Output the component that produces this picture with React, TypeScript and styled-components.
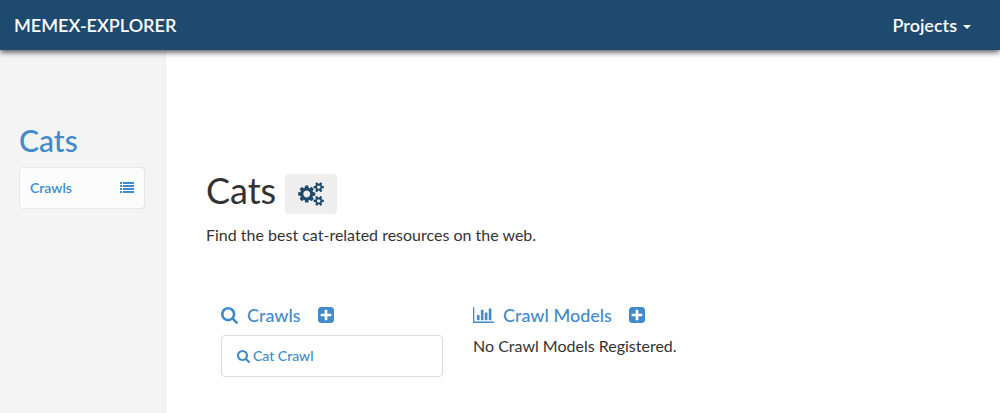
import React from "react";
import styled, { createGlobalStyle } from "styled-components";

const GlobalStyle = createGlobalStyle`
  *, *::before, *::after { box-sizing: border-box; }
  html, body, #root { min-height: 100vh; }
  body {
    margin: 0;
    background: #fff;
    color: #333;
    font-family: Lato, "Liberation Sans", sans-serif;
    font-size: 16px;
    line-height: 24px;
  }
  h1, h2, p, ul { margin: 0; padding: 0; }
  a { color: #428bca; text-decoration: none; }
`;

const Page = styled.div`
  display: flex;
  flex-direction: column;
  min-height: 100vh;
`;

const Navbar = styled.header`
  position: relative;
  z-index: 1;
  display: flex;
  align-items: center;
  justify-content: space-between;
  height: 50px;
  padding: 0 29px 0 14px;
  background: #1e4a70;
  box-shadow: 0 2px 6px rgba(0, 0, 0, 0.7);
`;

const Brand = styled.a`
  color: #fff;
  font-size: 18px;
  font-weight: 600;
`;

const MenuButton = styled.button`
  display: flex;
  align-items: center;
  gap: 6px;
  padding: 0;
  border: 0;
  background: none;
  color: #fff;
  font: inherit;
  font-size: 18px;
  font-weight: 600;
`;

const Caret = styled.span`
  margin-top: 3px;
  border-top: 4px solid;
  border-right: 4px solid transparent;
  border-left: 4px solid transparent;
`;

const Body = styled.div`
  display: flex;
  flex: 1;
`;

const Sidebar = styled.nav`
  flex: none;
  width: 166px;
  padding: 74px 20px 20px 19px;
  border-right: 1px solid #eee;
  background: #f4f4f4;
`;

const SidebarTitle = styled.h2`
  font-size: 30px;
  font-weight: 500;
  line-height: 33px;
`;

const SidebarLink = styled.a`
  display: flex;
  align-items: center;
  justify-content: space-between;
  height: 42px;
  margin-top: 10px;
  padding: 0 10px;
  border: 1px solid #e7e7e7;
  border-radius: 4px;
  background: #fcfcfc;
  font-size: 14px;
  font-weight: 600;
`;

const Main = styled.main`
  flex: 1;
  padding: 116px 36px 36px 40px;
`;

const TitleRow = styled.div`
  display: flex;
  align-items: center;
  gap: 9px;
`;

const Title = styled.h1`
  font-size: 36px;
  font-weight: 400;
  line-height: 40px;
`;

const SettingsButton = styled.button`
  display: flex;
  align-items: center;
  justify-content: center;
  width: 52px;
  height: 40px;
  margin-top: 8px;
  padding: 0;
  border: 0;
  border-radius: 4px;
  background: #eee;
  color: #1e4a70;
`;

const Description = styled.p`
  margin-top: 9px;
`;

const Columns = styled.div`
  display: grid;
  grid-template-columns: repeat(3, minmax(0, 222px));
  gap: 30px;
  margin-top: 56px;
  padding: 0 15px;
`;

const SectionHeader = styled.div`
  display: flex;
  align-items: center;
  gap: 9px;
  height: 24px;
  color: #428bca;
`;

const SectionTitle = styled.h2`
  font-size: 18px;
  font-weight: 500;
`;

const AddButton = styled.button`
  display: flex;
  margin-left: 8px;
  padding: 0;
  border: 0;
  background: none;
  color: inherit;
`;

const CrawlList = styled.ul`
  margin-top: 8px;
  list-style: none;
`;

const CrawlLink = styled.a`
  display: flex;
  align-items: center;
  gap: 3px;
  height: 42px;
  padding: 0 15px;
  border: 1px solid #ddd;
  border-radius: 4px;
  font-size: 14px;
  font-weight: 500;
`;

const EmptyNote = styled.p`
  margin-top: 7px;
`;

const Glyph = styled.svg`
  display: block;
  flex: none;
  fill: currentColor;
`;

type IconProps = { size: number };

const SearchIcon = ({ size }: IconProps) => (
  <Glyph width={size} height={size} viewBox="64 128 1664 1664" aria-hidden="true">
    <path d="M1216 832q0-185-131.5-316.5T768 384 451.5 515.5 320 832t131.5 316.5T768 1280t316.5-131.5T1216 832zm512 832q0 52-38 90t-90 38q-54 0-90-38l-343-342q-179 124-399 124-143 0-273.5-55.5t-225-150-150-225T64 832t55.5-273.5 150-225 225-150T768 128t273.5 55.5 225 150 150 225T1472 832q0 220-124 399l343 343q37 37 37 90z" />
  </Glyph>
);

const PlusIcon = ({ size }: IconProps) => (
  <Glyph width={size} height={size} viewBox="128 128 1536 1536" aria-hidden="true">
    <path d="M1408 960v-128q0-26-19-45t-45-19h-320v-320q0-26-19-45t-45-19h-128q-26 0-45 19t-19 45v320h-320q-26 0-45 19t-19 45v128q0 26 19 45t45 19h320v320q0 26 19 45t45 19h128q26 0 45-19t19-45v-320h320q26 0 45-19t19-45zm256-544v960q0 119-84.5 203.5t-203.5 84.5h-960q-119 0-203.5-84.5t-84.5-203.5v-960q0-119 84.5-203.5t203.5-84.5h960q119 0 203.5 84.5t84.5 203.5z" />
  </Glyph>
);

const ChartIcon = () => (
  <Glyph width={21} height={16} viewBox="0 128 2048 1536" aria-hidden="true">
    <path d="M640 896v512h-256v-512h256zm384-512v1024h-256v-1024h256zm1024 1152v128h-2048v-1536h128v1408h1920zm-640-896v768h-256v-768h256zm384-384v1152h-256v-1152h256z" />
  </Glyph>
);

const ListIcon = () => (
  <Glyph width={14} height={12} viewBox="0 0 14 12" aria-hidden="true">
    {[0, 3, 6, 9].map((y) => (
      <path key={y} d={`M0 ${y}h2v2h-2zM3 ${y}h11v2h-11z`} />
    ))}
  </Glyph>
);

const SMALL_COG =
  "v140q0 16-149 31-12 27-30 52 51 113 51 138 0 4-4 7-122 71-124 71-8 0-46-47t-52-68q-20 2-30 2t-30-2q-14 21-52 68t-46 47q-2 0-124-71-4-3-4-7 0-25 51-138-18-25-30-52-149-15-149-31v-140q0-16 149-31 13-29 30-52-51-113-51-138 0-4 4-7 4-2 35-20t59-34 30-16q8 0 46 46.5t52 67.5q20-2 30-2t30 2q51-71 92-112l6-2q4 0 124 70 4 3 4 7 0 25-51 138 17 23 30 52 149 15 149 31z";

const CogsIcon = () => (
  <Glyph width={26} height={24} viewBox="0 0 1920 1792" aria-hidden="true">
    <path
      d={
        "M896 896q0-106-75-181t-181-75-181 75-75 181 75 181 181 75 181-75 75-181zm768 512q0-52-38-90t-90-38-90 38-38 90q0 53 37.5 90.5t90.5 37.5 90.5-37.5 37.5-90.5zm0-1024q0-52-38-90t-90-38-90 38-38 90q0 53 37.5 90.5t90.5 37.5 90.5-37.5 37.5-90.5zm-384 421v185q0 10-7 19.5t-16 10.5l-155 24q-11 35-32 76 34 48 90 115 7 11 7 20 0 12-7 19-23 30-82.5 89.5t-78.5 59.5q-11 0-21-7l-115-90q-37 19-77 31-11 108-23 155-7 24-30 24h-186q-11 0-20-7.5t-10-17.5l-23-153q-34-10-75-31l-118 89q-7 7-20 7-11 0-21-8-144-133-144-160 0-9 7-19 10-14 41-53t47-61q-23-44-35-82l-152-24q-10-1-17-9.5t-7-19.5v-185q0-10 7-19.5t16-10.5l155-24q11-35 32-76-34-48-90-115-7-11-7-20 0-12 7-20 22-30 82-89t79-59q11 0 21 7l115 90q34-18 77-32 11-108 23-154 7-24 30-24h186q11 0 20 7.5t10 17.5l23 153q34 10 75 31l118-89q8-7 20-7 11 0 21 8 144 133 144 160 0 8-7 19-12 16-42 54t-45 60q23 48 34 82l152 23q10 2 17 10.5t7 19.5z" +
        `M1920 1338${SMALL_COG}M1920 314${SMALL_COG}`
      }
    />
  </Glyph>
);

export default function App() {
  return (
    <>
      <GlobalStyle />
      <Page>
        <Navbar>
          <Brand href="#home">MEMEX-EXPLORER</Brand>
          <MenuButton type="button" aria-haspopup="menu">
            Projects
            <Caret />
          </MenuButton>
        </Navbar>
        <Body>
          <Sidebar>
            <SidebarTitle>
              <a href="#cats">Cats</a>
            </SidebarTitle>
            <SidebarLink href="#crawls">
              Crawls
              <ListIcon />
            </SidebarLink>
          </Sidebar>
          <Main>
            <TitleRow>
              <Title>Cats</Title>
              <SettingsButton type="button" aria-label="Project settings">
                <CogsIcon />
              </SettingsButton>
            </TitleRow>
            <Description>Find the best cat-related resources on the web.</Description>
            <Columns>
              <section>
                <SectionHeader>
                  <SearchIcon size={17} />
                  <SectionTitle>
                    <a href="#crawls">Crawls</a>
                  </SectionTitle>
                  <AddButton type="button" aria-label="Add crawl">
                    <PlusIcon size={16} />
                  </AddButton>
                </SectionHeader>
                <CrawlList>
                  <li>
                    <CrawlLink href="#cat-crawl">
                      <SearchIcon size={13} />
                      Cat Crawl
                    </CrawlLink>
                  </li>
                </CrawlList>
              </section>
              <section>
                <SectionHeader>
                  <ChartIcon />
                  <SectionTitle>
                    <a href="#models">Crawl Models</a>
                  </SectionTitle>
                  <AddButton type="button" aria-label="Add crawl model">
                    <PlusIcon size={16} />
                  </AddButton>
                </SectionHeader>
                <EmptyNote>No Crawl Models Registered.</EmptyNote>
              </section>
            </Columns>
          </Main>
        </Body>
      </Page>
    </>
  );
}
